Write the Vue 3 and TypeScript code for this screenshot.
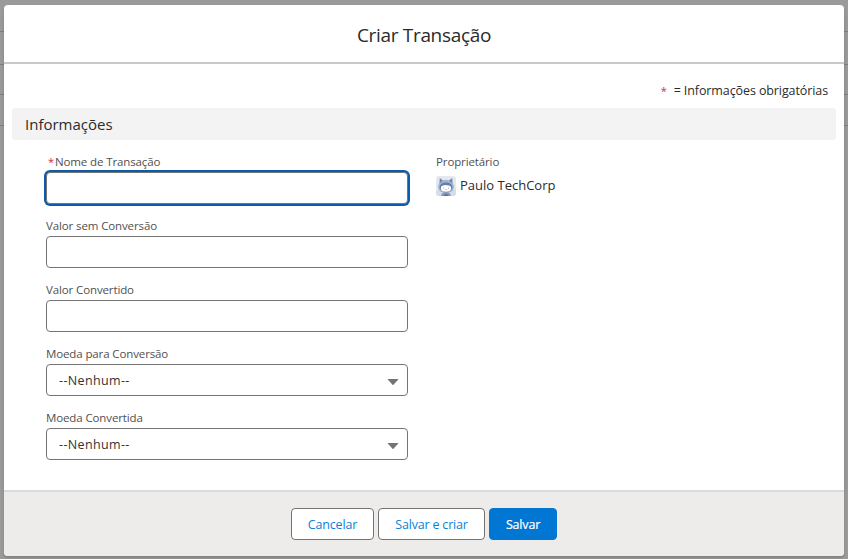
<script setup lang="ts">
import { ref } from 'vue'

interface Field {
  id: string
  label: string
  kind: 'text' | 'select'
  required?: boolean
}

const fields: Field[] = [
  { id: 'nome', label: 'Nome de Transação', kind: 'text', required: true },
  { id: 'valor-sem', label: 'Valor sem Conversão', kind: 'text' },
  { id: 'valor-conv', label: 'Valor Convertido', kind: 'text' },
  { id: 'moeda-para', label: 'Moeda para Conversão', kind: 'select' },
  { id: 'moeda-conv', label: 'Moeda Convertida', kind: 'select' },
]

const active = ref('nome')
</script>

<template>
  <div class="backdrop">
    <div class="rows"><i /><i /><i /><i /></div>
    <section class="modal" role="dialog">
      <header class="head"><h2 class="title">Criar Transação</h2></header>
      <main class="body">
        <p class="legend"><span class="star">*</span><span>= Informações obrigatórias</span></p>
        <h3 class="section">Informações</h3>
        <div class="columns">
          <div class="fields">
            <div v-for="f in fields" :key="f.id" class="field">
              <label class="label" :for="f.id">
                <span v-if="f.required" class="req">*</span><span>{{ f.label }}</span>
              </label>
              <input
                v-if="f.kind === 'text'"
                :id="f.id"
                class="control"
                :class="{ active: active === f.id }"
                type="text"
                @focus="active = f.id"
              />
              <button v-else :id="f.id" class="control select" type="button" @focus="active = f.id">
                <span>--Nenhum--</span>
                <svg width="12" height="8" viewBox="0 0 12 8"><path d="M1 1h10q.6 0 .2.6L6.5 6.8q-.5.5-1 0L.8 1.6Q.4 1 1 1z" fill="#747474" /></svg>
              </button>
            </div>
          </div>
          <div class="owner">
            <div class="label"><span>Proprietário</span></div>
            <div class="person">
              <svg class="avatar" width="20" height="20" viewBox="0 0 20 20">
                <rect width="20" height="20" rx="3" fill="#e4e8ef" />
                <path d="M0 15q3-2 7-1t13-1v4a3 3 0 0 1-3 3H3a3 3 0 0 1-3-3z" fill="#d5dde9" />
                <path d="M3.500 2.500q.2-.8 1-.2L7 4.200q3-.9 6 0l2.500-1.900q.8-.6 1 .2l.5 5.100q1.300 2 .8 4.600Q16.800 16.800 10 16.800T2.200 12.200q-.5-2.600.8-4.600z" fill="#a3b4d1" />
                <path d="M4 2.800l2.600 1.900L4.300 7zM16 2.800l-2.600 1.900L15.700 7z" fill="#687fac" />
                <path d="M5.200 20q.2-4 4.800-4t4.800 4z" fill="#8799bd" />
                <path d="M7.500 20q.3-2 2.500-2t2.500 2z" fill="#5b72a3" />
                <ellipse cx="10" cy="11.300" rx="6.300" ry="4.900" fill="#667da9" />
                <path d="M4.800 12.200q0-2.500 2.200-2.600l2-.7 4 .7q2.200.1 2.200 2.600 0 3.500-5.200 3.500t-5.200-3.500z" fill="#fff" />
                <path d="M7.500 11.600v1.200M12.500 11.600v1.200M9.300 13.500q.7.500 1.400 0" stroke="#9aaac8" stroke-width=".8" fill="none" />
              </svg>
              <span>Paulo TechCorp</span>
            </div>
          </div>
        </div>
      </main>
      <footer class="foot">
        <button class="btn cancel" type="button">Cancelar</button>
        <button class="btn again" type="button">Salvar e criar</button>
        <button class="btn save" type="button">Salvar</button>
      </footer>
    </section>
  </div>
</template>

<style>
body { margin: 0; overflow: hidden; }
</style>

<style scoped>
* { box-sizing: border-box; }
.backdrop {
  position: relative;
  width: 848px;
  height: 559px;
  padding: 5px 4px 3px;
  background: #9a9a9a;
  font-family: "Open Sans", "Noto Sans", sans-serif;
  color: #2b2b2b;
}
.rows { position: absolute; inset: 0; display: flex; flex-direction: column; padding-top: 31px; }
.rows i { height: 31px; border-top: 1px solid #7e7e7e; }
.rows i:first-child { height: 33px; }
.rows i:nth-child(2) { height: 30px; }
.rows i:last-child { height: 1px; }
.modal {
  position: relative;
  height: 551px;
  display: flex;
  flex-direction: column;
  border-radius: 4px;
  overflow: hidden;
  background: #fff;
  box-shadow: 0 2px 3px rgba(0, 0, 0, 0.16);
}
h2, h3, p { margin: 0; font-weight: 400; }
span { white-space: nowrap; }
.head {
  height: 59px;
  display: flex;
  align-items: center;
  justify-content: center;
  border-bottom: 2px solid #c9c9c9;
}
.title { font-size: 19px; line-height: 30px; padding-top: 2px; letter-spacing: -0.32px; }
.body { flex: 1; padding: 17px 8px 0; }
.legend {
  display: flex;
  justify-content: flex-end;
  gap: 7px;
  padding-right: 8px;
  height: 27px;
  line-height: 20px;
  font-size: 12.5px;
  letter-spacing: -0.1px;
}
.star, .req { color: #d0303b; }
.star { font-size: 11px; }
.section {
  height: 32px;
  padding-left: 13px;
  border-radius: 4px;
  background: #f3f3f3;
  font-size: 15px;
  line-height: 33px;
}
.columns { display: flex; padding: 12px 34px 0; gap: 28px; }
.fields { width: 362px; }
.field { height: 64px; }
.label { display: flex; height: 20px; line-height: 20px; font-size: 11.5px; letter-spacing: -0.12px; color: #505050; }
.field:first-child .label { padding-left: 2px; }
.req { width: 7px; font-size: 11px; }
.control {
  display: block;
  width: 362px;
  height: 32px;
  margin: 0;
  border: 1px solid #747474;
  border-radius: 4px;
  background: #fff;
  outline: none;
  font: inherit;
  font-size: 12.5px;
  letter-spacing: 0.36px;
  color: #333;
}
.control.active { box-shadow: 0 0 0 2px #0b5cab; }
.select { display: flex; align-items: center; justify-content: space-between; padding: 0 8px 0 12px; }
.select svg { margin-top: 3px; }
.person { display: flex; gap: 4px; height: 24px; padding-top: 4px; font-size: 13px; line-height: 20px; }
.person span { margin-top: -1px; }
.foot {
  position: relative;
  height: 66px;
  display: flex;
  justify-content: center;
  gap: 4px;
  padding-top: 16px;
  border-top: 2px solid #dddbda;
  background: #edecea;
}
.btn {
  height: 32px;
  padding: 0;
  border: 1px solid #747474;
  border-radius: 4px;
  background: #fff;
  color: #0b7fd9;
  font: inherit;
  font-size: 12.5px;
  letter-spacing: -0.18px;
}
.cancel { width: 83px; }
.again { width: 107px; }
.save { width: 68px; border-color: #0176d3; background: #0176d3; color: #fff; -webkit-text-stroke: 0.2px #fff; }
</style>
